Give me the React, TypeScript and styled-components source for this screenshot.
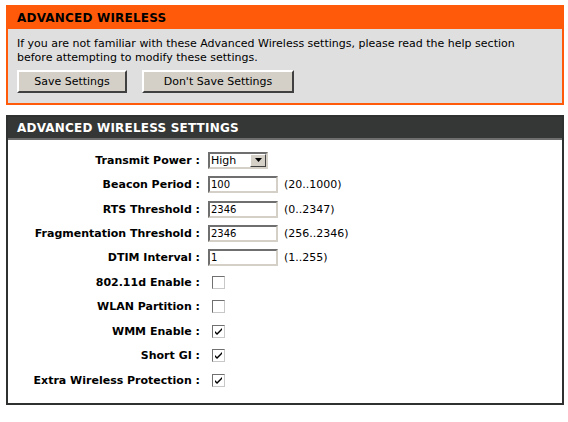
import React from "react"
import styled, { createGlobalStyle } from "styled-components"

const GlobalStyle = createGlobalStyle`
  body {
    margin: 0;
    background: #ffffff;
    font-family: "DejaVu Sans", Verdana, sans-serif;
    color: #000000;
  }
`

const Page = styled.div`
  width: 558px;
  padding: 5px 4px 0 6px;
  display: flex;
  flex-direction: column;
  gap: 10px;
`

const Box = styled.div<{ $tone: "orange" | "dark" }>`
  border: 2px solid ${(p) => (p.$tone === "orange" ? "#ff5a0a" : "#2f3130")};
  background: ${(p) => (p.$tone === "orange" ? "#dfdfdf" : "#ffffff")};
`

const BoxHeader = styled.div<{ $tone: "orange" | "dark" }>`
  height: ${(p) => (p.$tone === "orange" ? "22px" : "21px")};
  display: flex;
  align-items: center;
  padding-left: 9px;
  background: ${(p) => (p.$tone === "orange" ? "#ff5a0a" : "#343735")};
  color: ${(p) => (p.$tone === "orange" ? "#000000" : "#ffffff")};
  border-bottom: ${(p) => (p.$tone === "orange" ? "none" : "2px solid #6e6e6e")};
  font-size: 12px;
  font-weight: bold;
  letter-spacing: 0.2px;
`

const Intro = styled.div`
  padding: 8px 9px 10px;
  font-size: 11px;
  line-height: 14px;
`

const ButtonRow = styled.div`
  display: flex;
  gap: 15px;
  margin-top: 5px;
`

const Button = styled.button<{ $w: number }>`
  width: ${(p) => p.$w}px;
  height: 23px;
  padding: 0;
  background: #d4d0c8;
  border: 2px solid;
  border-color: #ffffff #404040 #404040 #ffffff;
  font-family: "DejaVu Sans", Verdana, sans-serif;
  font-size: 11px;
  color: #000000;
`

const Form = styled.div`
  display: grid;
  grid-template-columns: 192px 1fr;
  grid-auto-rows: 24.45px;
  column-gap: 8px;
  padding: 8px 0 11px;
`

const Label = styled.div`
  display: flex;
  align-items: center;
  justify-content: flex-end;
  font-size: 11px;
  font-weight: bold;
  white-space: nowrap;
`

const Control = styled.div`
  display: flex;
  align-items: center;
  font-size: 11px;
`

const Field = styled.div`
  width: 70px;
  height: 17px;
  box-sizing: border-box;
  border: 2px solid;
  border-color: #6f6f6f #d4d0c8 #d4d0c8 #6f6f6f;
  background: #ffffff;
  font-size: 10px;
  line-height: 13px;
  padding-left: 1px;
`

const Hint = styled.span`
  margin-left: 6px;
`

const Select = styled.div`
  width: 60px;
  height: 17px;
  box-sizing: border-box;
  border: 2px solid;
  border-color: #6f6f6f #d4d0c8 #d4d0c8 #6f6f6f;
  background: #ffffff;
  display: flex;
  align-items: stretch;
  font-size: 11px;
`

const SelectText = styled.div`
  flex: 1;
  line-height: 13px;
  padding-left: 1px;
`

const SelectButton = styled.div`
  width: 16px;
  box-sizing: border-box;
  background: #d4d0c8;
  border: 1px solid;
  border-color: #ffffff #404040 #404040 #ffffff;
  display: flex;
  align-items: center;
  justify-content: center;
`

const Check = styled.div`
  width: 13px;
  height: 13px;
  box-sizing: border-box;
  margin-left: 4px;
  border: 1px solid;
  border-color: #707070 #c8c8c8 #c8c8c8 #707070;
  background: #ffffff;
  display: flex;
  align-items: center;
  justify-content: center;
`

type Row =
  | { label: string; kind: "select"; value: string }
  | { label: string; kind: "text"; value: string; hint: string }
  | { label: string; kind: "check"; checked: boolean }

const rows: Row[] = [
  { label: "Transmit Power", kind: "select", value: "High" },
  { label: "Beacon Period", kind: "text", value: "100", hint: "(20..1000)" },
  { label: "RTS Threshold", kind: "text", value: "2346", hint: "(0..2347)" },
  { label: "Fragmentation Threshold", kind: "text", value: "2346", hint: "(256..2346)" },
  { label: "DTIM Interval", kind: "text", value: "1", hint: "(1..255)" },
  { label: "802.11d Enable", kind: "check", checked: false },
  { label: "WLAN Partition", kind: "check", checked: false },
  { label: "WMM Enable", kind: "check", checked: true },
  { label: "Short GI", kind: "check", checked: true },
  { label: "Extra Wireless Protection", kind: "check", checked: true },
]

const renderControl = (row: Row) => {
  if (row.kind === "select") {
    return (
      <Select>
        <SelectText>{row.value}</SelectText>
        <SelectButton>
          <svg width="7" height="4" viewBox="0 0 7 4">
            <path d="M0 0h7L3.5 4z" fill="#000" />
          </svg>
        </SelectButton>
      </Select>
    )
  }
  if (row.kind === "text") {
    return (
      <>
        <Field>{row.value}</Field>
        <Hint>{row.hint}</Hint>
      </>
    )
  }
  return (
    <Check>
      {row.checked && (
        <svg width="7" height="7" viewBox="0 0 7 7">
          <path d="M0 3l2 2 5-5v2L2 7 0 5z" fill="#000" />
        </svg>
      )}
    </Check>
  )
}

export default function App() {
  return (
    <>
      <GlobalStyle />
      <Page>
        <Box $tone="orange">
          <BoxHeader $tone="orange">ADVANCED WIRELESS</BoxHeader>
          <Intro>
            If you are not familiar with these Advanced Wireless settings, please read the help section
            <br />
            before attempting to modify these settings.
            <ButtonRow>
              <Button $w={110}>Save Settings</Button>
              <Button $w={152}>Don't Save Settings</Button>
            </ButtonRow>
          </Intro>
        </Box>
        <Box $tone="dark">
          <BoxHeader $tone="dark">ADVANCED WIRELESS SETTINGS</BoxHeader>
          <Form>
            {rows.map((row) => (
              <React.Fragment key={row.label}>
                <Label>{row.label} :</Label>
                <Control>{renderControl(row)}</Control>
              </React.Fragment>
            ))}
          </Form>
        </Box>
      </Page>
    </>
  )
}
